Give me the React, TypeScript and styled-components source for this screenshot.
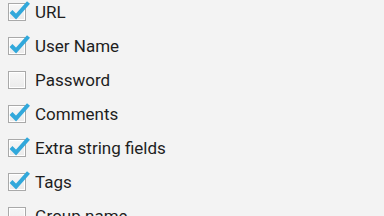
import styled, { createGlobalStyle } from "styled-components";

const GlobalStyle = createGlobalStyle`
  html, body {
    margin: 0;
    padding: 0;
    background: #f3f3f3;
    overflow: hidden;
  }
`;

const Screen = styled.div`
  width: 384px;
  height: 216px;
  background: #f3f3f3;
  overflow: hidden;
  font-family: Roboto, "Liberation Sans", sans-serif;
`;

const List = styled.ul`
  list-style: none;
  margin: -5px 0 0 0;
  padding: 0;
`;

const Row = styled.li`
  height: 34px;
  display: flex;
  align-items: center;
  padding-left: 8px;
  gap: 9px;
`;

const Box = styled.span`
  position: relative;
  width: 16px;
  height: 16px;
  border: 1px solid #a9a9a9;
  background: linear-gradient(#f7f7f7, #ebebeb);
  box-shadow: inset 0 0 0 1px #ffffff;
  flex-shrink: 0;
`;

const Check = styled.svg`
  position: absolute;
  left: -1px;
  top: -1px;
  width: 18px;
  height: 18px;
  overflow: visible;
`;

const Label = styled.span`
  font-size: 17px;
  color: #1e1e1e;
  line-height: 1;
`;

const items: { label: string; checked: boolean }[] = [
  { label: "URL", checked: true },
  { label: "User Name", checked: true },
  { label: "Password", checked: false },
  { label: "Comments", checked: true },
  { label: "Extra string fields", checked: true },
  { label: "Tags", checked: true },
  { label: "Group name", checked: false },
];

export default function App() {
  return (
    <Screen>
      <GlobalStyle />
      <List>
        {items.map((it) => (
          <Row key={it.label}>
            <Box>
              {it.checked && (
                <Check viewBox="0 0 18 18">
                  <polyline
                    points="3,8.5 8,13.5 20.5,-0.5"
                    fill="none"
                    stroke="#31a8db"
                    strokeWidth="4"
                  />
                </Check>
              )}
            </Box>
            <Label>{it.label}</Label>
          </Row>
        ))}
      </List>
    </Screen>
  );
}
